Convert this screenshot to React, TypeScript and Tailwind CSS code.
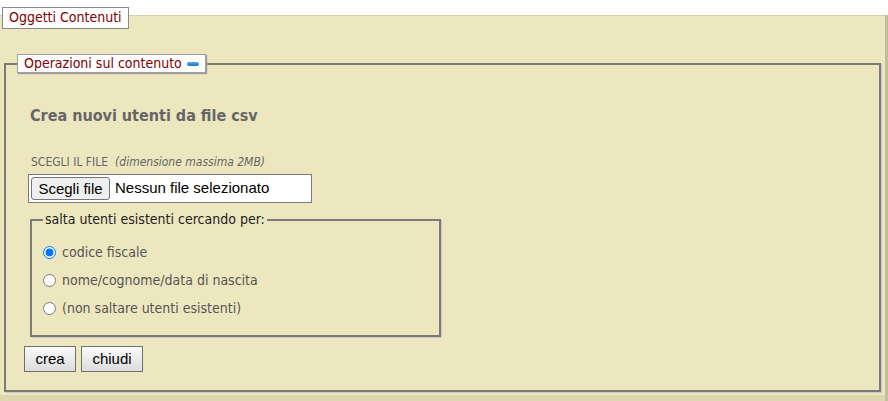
import React from "react";

const tahoma = "font-['DejaVu_Sans_Condensed','DejaVu_Sans',sans-serif]";
const arial = "font-['Liberation_Sans',Arial,sans-serif]";

const opzioni = [
  { id: "cf", label: "codice fiscale", checked: true },
  { id: "ncd", label: "nome/cognome/data di nascita", checked: false },
  { id: "none", label: "(non saltare utenti esistenti)", checked: false },
];

const App = () => {
  return (
    <div className={`w-[888px] h-[401px] bg-white overflow-hidden flex flex-col ${tahoma}`}>
      {/* tab */}
      <div className="h-[15px] pl-[2px] pt-[5px] relative z-10">
        <div className="inline-flex items-center h-[22px] px-[6px] bg-white border border-[#8a8a8a] text-[14px] text-[#800000]">
          Oggetti Contenuti
        </div>
      </div>

      <div className="flex flex-1">
        <div className="flex-1 bg-[#ede7bf] border-t border-[#d6cfa6] border-b-[6px] border-b-[#ddd6ae] pl-[4px] pr-[4px] pt-[38px] pb-[3px]">
          <fieldset className="h-[338px] border-2 border-[#7b7b7b] shadow-[1px_1px_0_#c9c9c9] p-0 m-0 min-w-0">
            <legend className="ml-[11px] h-[19px] px-[6px] bg-white border border-[#a0a0a0] shadow-[1px_1px_1px_#9a9a9a] text-[14px] text-[#800000] flex items-center gap-[5px]">
              Operazioni sul contenuto
              <span className="inline-block w-[12px] h-[4px] rounded-[2px] bg-gradient-to-b from-[#5aa7f0] to-[#1f6fcb]" />
            </legend>

            <div className="pl-[19px]">
              <h2 className="mt-[31px] ml-[5px] text-[16px] font-bold text-[#666666]">Crea nuovi utenti da file csv</h2>

              <div className="mt-[25px] ml-[6px] text-[12px] text-[#666666] flex gap-[7px]">
                <span>SCEGLI IL FILE</span>
                <span className="italic">(dimensione massima 2MB)</span>
              </div>

              <div className={`mt-[3px] ml-[3px] w-[284px] h-[29px] bg-white border border-[#7a7a7a] flex items-center pl-[2px] gap-[5px] ${arial}`}>
                <button className="h-[23px] w-[79px] bg-[#efefef] border border-[#767676] rounded-[3px] text-[15px] text-black">
                  Scegli file
                </button>
                <span className="text-[15px] text-black">Nessun file selezionato</span>
              </div>

              <fieldset className="mt-[6px] ml-[5px] w-[411px] h-[128px] border-2 border-[#7b7b7b] shadow-[1px_1px_0_#c9c9c9] p-0 m-0 min-w-0">
                <legend className="ml-[11px] px-[2px] text-[14px] text-[#222222]">salta utenti esistenti cercando per:</legend>
                <div className="pt-[8px] pl-[11px] flex flex-col">
                  {opzioni.map((o) => (
                    <label key={o.id} className="h-[28px] flex items-center gap-[6px] text-[14px] text-[#555555]">
                      <input type="radio" name="salta" defaultChecked={o.checked} className="w-[13px] h-[13px] m-0" />
                      {o.label}
                    </label>
                  ))}
                </div>
              </fieldset>

              <div className={`mt-[9px] -ml-[1px] flex gap-[5px] ${arial}`}>
                <button className="h-[26px] w-[52px] bg-gradient-to-b from-[#fafafa] to-[#dcdcdc] border border-[#707070] text-[15px] text-black">
                  crea
                </button>
                <button className="h-[26px] w-[62px] bg-gradient-to-b from-[#fafafa] to-[#dcdcdc] border border-[#707070] text-[15px] text-black">
                  chiudi
                </button>
              </div>
            </div>
          </fieldset>
        </div>
        <div className="w-[3px] bg-[#c4be9a]" />
      </div>
    </div>
  );
};

export default App;
